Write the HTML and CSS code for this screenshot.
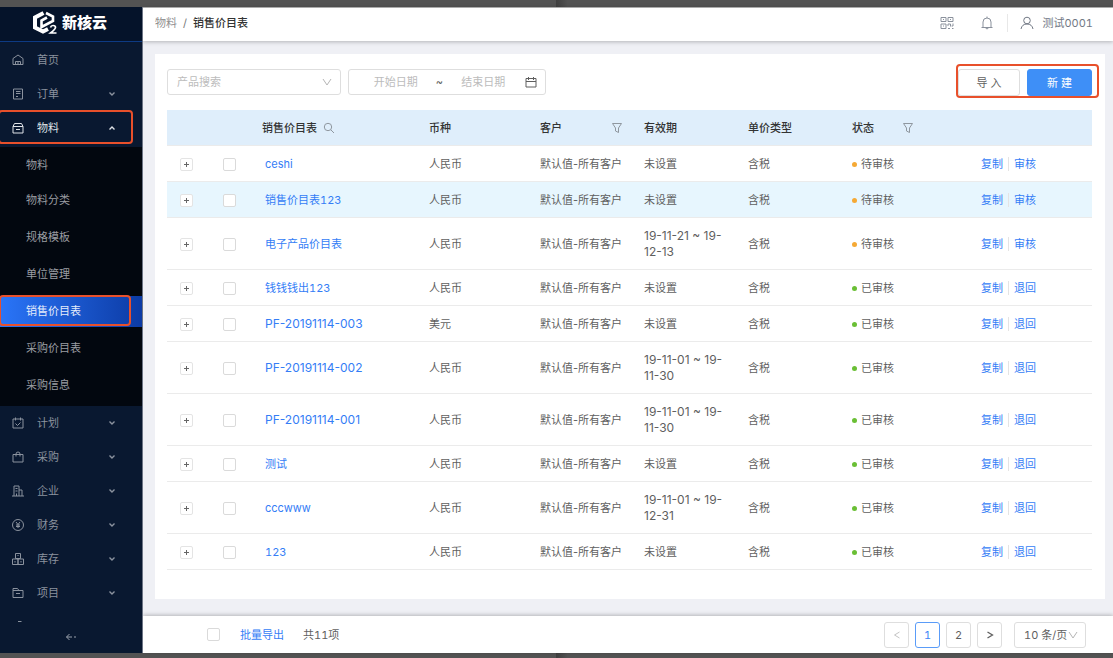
FILE: index.html
```html
<!DOCTYPE html>
<html lang="zh-CN">
<head>
<meta charset="utf-8">
<title>销售价目表</title>
<link rel="stylesheet" href="styles.css">
</head>
<body>
<svg class="sprite" aria-hidden="true">
  <symbol id="down" viewBox="0 0 12 12"><path d="M3.500 4.500l2.500 2.500 2.500-2.500" stroke-width="1.400"/></symbol>
  <symbol id="wide-down" viewBox="0 0 12 12"><path d="M2 3l4 6 4-6"/></symbol>
  <symbol id="filter" viewBox="0 0 12 12"><path d="M1.500 1.500h9L7.500 6v4.500L4.500 9V6z"/></symbol>
</svg>
<div class="window">
  <div class="app">
    <aside class="sidebar">
      <div class="brand">
        <svg class="brand-mark" viewBox="0 0 26 24" aria-hidden="true">
          <path d="M11.500 2L3 6.500v10L11 20.500l5-2.500" stroke-width="4"/>
          <path d="M14 2l7 3.500v4.500L9.500 16V9.500L15 6.500" stroke-width="2.600"/>
          <path d="M18.500 16.500q.5-2 2.500-2 2.500 0 2.500 2 0 1.500-5 5.500h6" stroke-width="1.700"/>
        </svg>
        <span>新核云</span>
      </div>
      <nav class="nav">
        <ul class="menu">
          <li><a class="item" href="#"><svg viewBox="0 0 12 12"><path d="M1 10.500V4.500L6 1l5 3.500v6zM3.500 10.500V7.500h5v3M6 7.500v3"/></svg><span>首页</span></a></li>
          <li><a class="item" href="#"><svg viewBox="0 0 12 12"><path d="M1.500 1h9v10h-9zM4 3.500h4.500M4 5.500h4.500M4 8.500h2"/></svg><span>订单</span><svg class="arrow"><use href="#down"/></svg></a></li>
          <li>
            <a class="item open" href="#"><svg viewBox="0 0 12 12"><path d="M2.500 1.500h7l1.500 3v6.500H1V4.500zM1 4.500h10M4 7.500h4"/></svg><span>物料</span><svg class="arrow up"><use href="#down"/></svg></a>
            <ul class="submenu">
              <li><a href="#">物料</a></li>
              <li><a href="#">物料分类</a></li>
              <li><a href="#">规格模板</a></li>
              <li><a href="#">单位管理</a></li>
              <li><a class="current" href="#">销售价目表</a></li>
              <li><a href="#">采购价目表</a></li>
              <li><a href="#">采购信息</a></li>
            </ul>
          </li>
          <li><a class="item" href="#"><svg viewBox="0 0 12 12"><path d="M1 2h10v9H1zM3.500.5v3M8.500.5v3M3.500 6.500l2 2 3-3"/></svg><span>计划</span><svg class="arrow"><use href="#down"/></svg></a></li>
          <li><a class="item" href="#"><svg viewBox="0 0 12 12"><path d="M1 3.500h10v7.500H1zM4 5.500V3q0-2 2-2t2 2v2.500"/></svg><span>采购</span><svg class="arrow"><use href="#down"/></svg></a></li>
          <li><a class="item" href="#"><svg viewBox="0 0 12 12"><path d="M0 11h12M2 11V1h5v10M7 5h3v6M3.500 3.500h2M3.500 6h2M4.500 11V8.500"/></svg><span>企业</span><svg class="arrow"><use href="#down"/></svg></a></li>
          <li><a class="item" href="#"><svg viewBox="0 0 12 12"><circle cx="6" cy="6" r="5.500"/><path d="M4 3l2 2.500L8 3M6 5.500V9M4 6h4M4 7.500h4"/></svg><span>财务</span><svg class="arrow"><use href="#down"/></svg></a></li>
          <li><a class="item" href="#"><svg viewBox="0 0 12 12"><path d="M3.500.5h5v5h-5zM.5 6h5.500v5.500H.5zM6 6h5.500v5.500H6zM6 2v1M3 8v1.500M9 8v1.500"/></svg><span>库存</span><svg class="arrow"><use href="#down"/></svg></a></li>
          <li><a class="item" href="#"><svg viewBox="0 0 12 12"><path d="M1 1.500h4.500L7 3.500h4v7H1zM1 3.500h6M4 6.500h4"/></svg><span>项目</span><svg class="arrow"><use href="#down"/></svg></a></li>
          <li><a class="item" href="#" aria-label="更多"><svg viewBox="0 0 12 12"><path d="M6 .5h3.500M1 4h10v7H1z"/></svg></a></li>
        </ul>
      </nav>
      <button class="collapse" type="button" aria-label="收起菜单"><svg viewBox="0 0 12 12"><path d="M4.500 3L1.500 6l3 3M1.500 6H7M9 6h2"/></svg></button>
      <div class="mark mark-menu"></div>
      <div class="mark mark-current"></div>
    </aside>

    <div class="page">
      <header class="topbar">
        <nav class="crumbs"><a href="#">物料</a><span>/</span><strong>销售价目表</strong></nav>
        <div class="tools">
          <button type="button" aria-label="二维码"><svg viewBox="0 0 14 14"><path d="M1 1.500h5v4H1zM8 1.500h5v4H8zM1 8h5v4.500H1zM8 10V8h2.500v2.500M13 7.500V10h-1.500M8 12.500h2M12 12.500h1.500M3 3.500h1M10 3.500h1M3 10h1"/></svg></button>
          <button type="button" aria-label="通知"><svg viewBox="0 0 14 14"><path d="M1.500 11.500h11M3 11.500V6q0-4 4-4t4 4v5.500M7 2V.5M5.500 12q1.500 2 3 0"/></svg></button>
          <a class="user" href="#"><svg viewBox="0 0 14 14"><circle cx="7" cy="4.500" r="3.300"/><path d="M1 13q1-5 6-5t6 5"/></svg>测试0001</a>
        </div>
      </header>

      <main class="card">
        <form class="toolbar">
          <div class="select search">
            <select aria-label="产品搜索"><option>产品搜索</option></select>
            <svg><use href="#wide-down"/></svg>
          </div>
          <div class="range">
            <input type="text" placeholder="开始日期" aria-label="开始日期">
            <span>~</span>
            <input type="text" placeholder="结束日期" aria-label="结束日期">
            <svg viewBox="0 0 12 12"><path d="M1 2.500h10v8.500H1zM1 5.500h10M3.500 1v3M8.500 1v3"/></svg>
          </div>
          <div class="actions">
            <button class="btn" type="button">导 入</button>
            <button class="btn primary" type="button">新 建</button>
            <div class="mark mark-actions"></div>
          </div>
        </form>

        <table class="list">
          <colgroup><col class="c-plus"><col class="c-check"><col class="c-name"><col class="c-currency"><col class="c-mid"><col class="c-mid"><col class="c-mid"><col class="c-state"><col class="c-ops"></colgroup>
          <thead>
            <tr>
              <th></th><th></th>
              <th><span class="head">销售价目表<svg viewBox="0 0 12 12"><circle cx="5" cy="5" r="3.700"/><path d="M7.800 7.800L11 11"/></svg></span></th>
              <th>币种</th>
              <th><span class="head spread">客户<svg><use href="#filter"/></svg></span></th>
              <th>有效期</th><th>单价类型</th>
              <th><span class="head state-head">状态<svg><use href="#filter"/></svg></span></th>
              <th></th>
            </tr>
          </thead>
          <tbody>
            <tr><td><button class="plus" type="button" aria-label="展开"></button></td><td><input type="checkbox" aria-label="ceshi"></td><td class="name"><a href="#">ceshi</a></td><td>人民币</td><td>默认值-所有客户</td><td>未设置</td><td>含税</td><td><span class="state wait">待审核</span></td><td class="ops"><a href="#">复制</a><a href="#">审核</a></td></tr>
            <tr class="hover"><td><button class="plus" type="button" aria-label="展开"></button></td><td><input type="checkbox" aria-label="销售价目表123"></td><td class="name"><a href="#">销售价目表123</a></td><td>人民币</td><td>默认值-所有客户</td><td>未设置</td><td>含税</td><td><span class="state wait">待审核</span></td><td class="ops"><a href="#">复制</a><a href="#">审核</a></td></tr>
            <tr><td><button class="plus" type="button" aria-label="展开"></button></td><td><input type="checkbox" aria-label="电子产品价目表"></td><td class="name"><a href="#">电子产品价目表</a></td><td>人民币</td><td>默认值-所有客户</td><td class="code">19-11-21 ~ 19-12-13</td><td>含税</td><td><span class="state wait">待审核</span></td><td class="ops"><a href="#">复制</a><a href="#">审核</a></td></tr>
            <tr><td><button class="plus" type="button" aria-label="展开"></button></td><td><input type="checkbox" aria-label="钱钱钱出123"></td><td class="name"><a href="#">钱钱钱出123</a></td><td>人民币</td><td>默认值-所有客户</td><td>未设置</td><td>含税</td><td><span class="state done">已审核</span></td><td class="ops"><a href="#">复制</a><a href="#">退回</a></td></tr>
            <tr><td><button class="plus" type="button" aria-label="展开"></button></td><td><input type="checkbox" aria-label="PF-20191114-003"></td><td class="name code"><a href="#">PF-20191114-003</a></td><td>美元</td><td>默认值-所有客户</td><td>未设置</td><td>含税</td><td><span class="state done">已审核</span></td><td class="ops"><a href="#">复制</a><a href="#">退回</a></td></tr>
            <tr><td><button class="plus" type="button" aria-label="展开"></button></td><td><input type="checkbox" aria-label="PF-20191114-002"></td><td class="name code"><a href="#">PF-20191114-002</a></td><td>人民币</td><td>默认值-所有客户</td><td class="code">19-11-01 ~ 19-11-30</td><td>含税</td><td><span class="state done">已审核</span></td><td class="ops"><a href="#">复制</a><a href="#">退回</a></td></tr>
            <tr><td><button class="plus" type="button" aria-label="展开"></button></td><td><input type="checkbox" aria-label="PF-20191114-001"></td><td class="name code"><a href="#">PF-20191114-001</a></td><td>人民币</td><td>默认值-所有客户</td><td class="code">19-11-01 ~ 19-11-30</td><td>含税</td><td><span class="state done">已审核</span></td><td class="ops"><a href="#">复制</a><a href="#">退回</a></td></tr>
            <tr><td><button class="plus" type="button" aria-label="展开"></button></td><td><input type="checkbox" aria-label="测试"></td><td class="name"><a href="#">测试</a></td><td>人民币</td><td>默认值-所有客户</td><td>未设置</td><td>含税</td><td><span class="state done">已审核</span></td><td class="ops"><a href="#">复制</a><a href="#">退回</a></td></tr>
            <tr><td><button class="plus" type="button" aria-label="展开"></button></td><td><input type="checkbox" aria-label="cccwww"></td><td class="name"><a href="#">cccwww</a></td><td>人民币</td><td>默认值-所有客户</td><td class="code">19-11-01 ~ 19-12-31</td><td>含税</td><td><span class="state done">已审核</span></td><td class="ops"><a href="#">复制</a><a href="#">退回</a></td></tr>
            <tr><td><button class="plus" type="button" aria-label="展开"></button></td><td><input type="checkbox" aria-label="123"></td><td class="name"><a href="#">123</a></td><td>人民币</td><td>默认值-所有客户</td><td>未设置</td><td>含税</td><td><span class="state done">已审核</span></td><td class="ops"><a href="#">复制</a><a href="#">退回</a></td></tr>
          </tbody>
        </table>
      </main>

      <footer class="footer">
        <input type="checkbox" aria-label="全选">
        <a href="#">批量导出</a>
        <span>共11项</span>
        <div class="pager">
          <button type="button" disabled aria-label="上一页"><svg viewBox="0 0 12 12"><path d="M8.500 3L3.500 6l5 3"/></svg></button>
          <button class="active" type="button">1</button>
          <button type="button">2</button>
          <button type="button" aria-label="下一页"><svg viewBox="0 0 12 12"><path d="M3.500 3l5 3-5 3" stroke-width="1.300"/></svg></button>
          <div class="select size">
            <select aria-label="每页条数"><option>10 条/页</option></select>
            <svg><use href="#wide-down"/></svg>
          </div>
        </div>
      </footer>
    </div>
  </div>
</div>
</body>
</html>
```

FILE: styles.css
```css
* { box-sizing: border-box; }

body {
  margin: 0;
  color: #5f5f5f;
  font: 11px/16px Inter, "Noto Sans CJK SC", sans-serif;
}

button, input, select { margin: 0; font: inherit; color: inherit; }
button { padding: 0; border: 0; background: none; }
a { color: #347df6; text-decoration: none; }
ul { margin: 0; padding: 0; list-style: none; }
svg { width: 12px; height: 12px; flex: none; fill: none; stroke: currentColor; stroke-width: 1; }
.sprite { position: absolute; width: 0; height: 0; }

.window {
  display: flex;
  height: 100vh;
  padding: 7px 0 5px;
  background: linear-gradient(90deg, #535353 50%, #404040 50%, #535353 51%);
}
.app { display: flex; flex: 1; min-width: 0; background: #eff0f5; }

/* Sidebar */
.sidebar {
  position: relative;
  display: flex;
  flex-direction: column;
  flex: none;
  width: 143px;
  background: #091830;
  border-right: 1px solid #6d7585;
}
.brand {
  display: flex;
  align-items: center;
  gap: 4px;
  height: 35px;
  padding: 0 0 3px 32px;
  background: #05132a;
  border-bottom: 1px solid #0d3a83;
  color: #fff;
  font-size: 15px;
  font-weight: 900;
}
.brand-mark { width: 26px; height: 24px; }
.nav { flex: 1; min-height: 0; padding-top: 1px; overflow: hidden; }
.item {
  display: flex;
  align-items: center;
  height: 34px;
  padding: 0 24px 0 12px;
  color: #8b929e;
}
.item span { flex: 1; margin-left: 13px; }
.item.open { height: 36px; padding-bottom: 2px; color: #dfe2e7; }
.arrow.up { transform: rotate(180deg); }
.submenu { padding: 3px 0 5px; background: #02070f; }
.submenu li + li { margin-top: 6px; }
.submenu li:nth-child(2) { margin-top: 4px; }
.submenu a { display: block; padding-left: 26px; line-height: 31px; color: #9a9da2; }
.submenu .current { color: #e4ecfb; background: linear-gradient(90deg, #2a75f8, #0c3ba5); }
.collapse {
  display: flex;
  justify-content: center;
  align-items: center;
  height: 30px;
  padding-bottom: 2px;
  color: #9aa1ac;
}

/* Highlight frames laid over the interface */
.mark { position: absolute; border: 2px solid #e8502b; border-radius: 4px; pointer-events: none; }
.mark-menu { top: 103px; left: -2px; width: 135px; height: 34px; }
.mark-current { top: 288px; left: -1px; width: 132px; height: 31px; }
.mark-actions { inset: -5px -7px -3px -2px; }

/* Top bar */
.page { display: flex; flex-direction: column; flex: 1; min-width: 0; }
.topbar {
  display: flex;
  align-items: center;
  justify-content: space-between;
  height: 34px;
  padding: 0 20px 3px 12px;
  border-top: 1px solid #aaa;
  background: #fff;
  box-shadow: 0 1px 4px rgba(0, 0, 0, .25);
}
.crumbs { display: flex; gap: 6px; color: #777; }
.crumbs a { color: #8f8f8f; }
.crumbs strong { color: #333; font-weight: 500; }
.tools { display: flex; align-items: center; color: #8a919c; }
.tools svg { display: block; width: 14px; height: 14px; }
.tools button { margin-right: 26px; }
.tools button + button { margin-right: 13px; }
.user {
  display: flex;
  align-items: center;
  gap: 8px;
  height: 18px;
  padding-left: 12px;
  border-left: 1px solid #e8e8e8;
  color: #727985;
}
.user, .name, .footer { font-variant-numeric: tabular-nums; }

/* Content */
.card { flex: 1; margin: 13px 8px 17px 12px; padding: 15px 13px 0 12px; background: #fff; }
.toolbar { display: flex; gap: 7px; margin-bottom: 15px; }
.select { position: relative; }
.select select {
  width: 100%;
  height: 26px;
  padding: 0 9px;
  border: 1px solid #dedede;
  border-radius: 3px;
  background: #fff;
  appearance: none;
}
.select svg { position: absolute; top: 7px; right: 8px; color: #b5b5b5; pointer-events: none; }
.search { width: 174px; color: #bcbcbc; }
.range {
  display: flex;
  align-items: center;
  width: 198px;
  height: 26px;
  padding: 0 8px 0 9px;
  border: 1px solid #dedede;
  border-radius: 3px;
}
.range input { flex: 1; min-width: 0; padding: 0; border: 0; outline: 0; background: none; text-align: center; }
.range input::placeholder { color: #bcbcbc; }
.range span { width: 12px; text-align: center; }
.range svg { margin-left: 4px; }
.actions { position: relative; display: flex; gap: 7px; margin-left: auto; }
.btn { width: 62px; height: 27px; margin-bottom: -1px; border: 1px solid #dedede; border-radius: 3px; background: #fff; }
.btn.primary { width: 65px; border-color: #3e8ff7; background: #3e8ff7; color: #fff; }

.list { width: 100%; table-layout: fixed; border-collapse: separate; border-spacing: 0; }
.c-plus { width: 40px; }
.c-check { width: 46px; }
.c-name { width: 167px; }
.c-currency { width: 111px; }
.c-mid { width: 104px; }
.c-state { width: 129px; }
.c-ops { width: 120px; }
.list th, .list td { padding: 10px 9px 9px; border-bottom: 1px solid #ebebeb; text-align: left; }
.list th { background: #dfeefb; color: #333; font-weight: 500; }
.list td:nth-child(1) { padding-left: 13px; }
.list td:nth-child(2) { padding-left: 16px; }
.list .name { padding-left: 12px; }
.list td:nth-child(5) { padding-right: 0; }
.list .code { font-size: 12px; font-variant-numeric: normal; }
.hover td { background: #e7f6fe; }
.head { display: flex; align-items: center; gap: 6px; }
.head svg { color: #8f979f; }
.spread { justify-content: space-between; padding-right: 3px; }
.state-head { gap: 28px; }

input[type="checkbox"] {
  display: block;
  width: 13px;
  height: 13px;
  border: 1px solid #dadada;
  border-radius: 2px;
  background: #fff;
  appearance: none;
}
.plus {
  display: block;
  width: 13px;
  height: 13px;
  border: 1px solid #e4e4e4;
  border-radius: 2px;
  background:
    linear-gradient(#666, #666) center / 5px 1px no-repeat,
    linear-gradient(#666, #666) center / 1px 5px no-repeat,
    #fff;
}
.state { display: flex; align-items: center; gap: 4px; }
.state::before { content: ""; width: 5px; height: 5px; border-radius: 50%; background: #f5a935; }
.state.done::before { background: #6abf35; }
.ops a + a { margin-left: 5px; padding-left: 5px; border-left: 1px solid #e4e4e4; }

/* Footer */
.footer {
  display: flex;
  align-items: center;
  height: 37px;
  padding: 0 27px 0 64px;
  background: #fff;
  box-shadow: 0 -1px 4px rgba(0, 0, 0, .25);
}
.footer > a { margin: 0 19px 0 20px; }
.pager { display: flex; gap: 6px; margin-left: auto; }
.pager button {
  display: flex;
  align-items: center;
  justify-content: center;
  width: 25px;
  height: 26px;
  border: 1px solid #dedede;
  border-radius: 3px;
}
.pager button:disabled { color: #c4c4c4; }
.pager .active { border-color: #5a9cf8; color: #3f85f6; }
.size { width: 72px; margin-left: 6px; }
.size svg { right: 7px; }
```
